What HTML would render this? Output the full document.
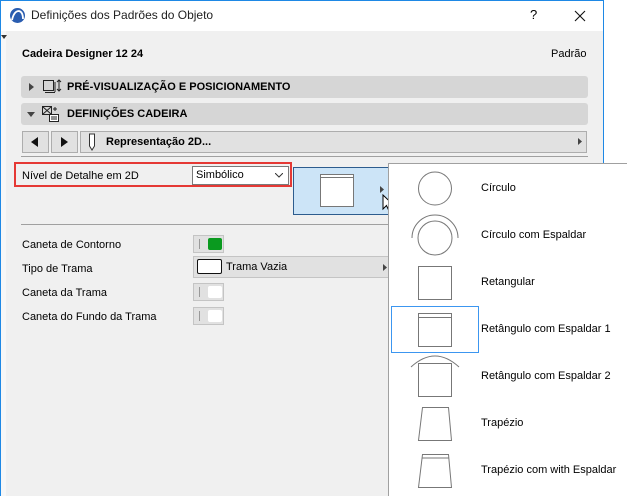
<!DOCTYPE html>
<html><head><meta charset="utf-8"><style>
*{margin:0;padding:0;box-sizing:border-box}
body{width:627px;height:496px;overflow:hidden;background:#fff;font-family:"Liberation Sans",sans-serif;font-size:11px;color:#000;position:relative}
.a{position:absolute}
.t{position:absolute;white-space:nowrap;line-height:13px}
.bar{position:absolute;background:#d6d6d6;border-radius:3px}
.btn{position:absolute;background:#e1e1e1;border:1px solid #adadad}
.pen{position:absolute;background:#e1e1e1;border:1px solid #c4c4c4;width:31px;height:18px}
.pen i{position:absolute;left:5px;top:3px;width:1px;height:10px;background:#999}
.pen b{position:absolute;left:14px;top:2px;width:14px;height:12px;border-radius:2px;background:#fff}
</style></head><body>
<div class="a" style="left:0;top:0;width:604px;height:496px;background:#f0f0f0;border-left:1px solid #1e88e5;border-right:1px solid #1e88e5;border-top:1px solid #1e88e5"></div>
<div class="a" style="left:1px;top:31px;width:5px;height:465px;background:#f7f7f7"></div>
<div class="a" style="left:1px;top:1px;width:602px;height:30px;background:#fff"></div>
<svg class="a" style="left:9px;top:7px" width="17" height="17" viewBox="0 0 17 17"><circle cx="8.5" cy="8.5" r="7.5" fill="#2a5db0"/><path d="M3 13 Q5 4 10 4 Q14 5 14 12" stroke="#fff" stroke-width="1.8" fill="none"/></svg>
<div class="t" style="left:31px;top:9px;font-size:12px;color:#222">Definições dos Padrões do Objeto</div>
<div class="t" style="left:530px;top:8px;font-size:13px">?</div>
<svg class="a" style="left:574px;top:10px" width="12" height="12"><path d="M1 1L11 11M11 1L1 11" stroke="#111" stroke-width="1.1"/></svg>
<svg class="a" style="left:1px;top:35px" width="6" height="4"><path d="M0 0H6L3 4z" fill="#333"/></svg>
<div class="t" style="left:22px;top:48px;font-weight:bold;font-size:11px">Cadeira Designer 12 24</div>
<div class="t" style="left:551px;top:48px">Padrão</div>
<div class="bar" style="left:21px;top:76px;width:567px;height:22px"></div>
<svg class="a" style="left:29px;top:83px" width="5" height="8"><path d="M0 0L5 4L0 8z" fill="#444"/></svg>
<svg class="a" style="left:42px;top:79px" width="20" height="16"><rect x="1.5" y="1.5" width="10" height="10" fill="none" stroke="#222"/><path d="M3 13.5H13M13 3V13" stroke="#222"/><path d="M17 1V12M15 3L17 1L19 3M15 10L17 12L19 10" stroke="#222" fill="none"/></svg>
<div class="t" style="left:67px;top:81px;font-weight:bold">PRÉ-VISUALIZAÇÃO E POSICIONAMENTO</div>
<div class="bar" style="left:21px;top:103px;width:567px;height:22px"></div>
<svg class="a" style="left:27px;top:112px" width="8" height="5"><path d="M0 0H8L4 5z" fill="#444"/></svg>
<svg class="a" style="left:41px;top:105px" width="20" height="18"><rect x="1.5" y="1.5" width="9" height="8" fill="none" stroke="#222"/><path d="M2 2L10 9M10 2L2 9" stroke="#222"/><rect x="8.5" y="9.5" width="9" height="7" fill="#fff" stroke="#222"/><path d="M10 12H16M10 14H16M14 2V6M12 4H16" stroke="#222"/></svg>
<div class="t" style="left:67px;top:108px;font-weight:bold">DEFINIÇÕES CADEIRA</div>
<div class="btn" style="left:22px;top:131px;width:27px;height:22px"></div>
<svg class="a" style="left:31px;top:137px" width="7" height="10"><path d="M7 0L0 5L7 10z" fill="#111"/></svg>
<div class="btn" style="left:51px;top:131px;width:27px;height:22px"></div>
<svg class="a" style="left:61px;top:137px" width="7" height="10"><path d="M0 0L7 5L0 10z" fill="#111"/></svg>
<div class="btn" style="left:80px;top:131px;width:507px;height:22px"></div>
<svg class="a" style="left:88px;top:133px" width="8" height="19"><path d="M1.5 1V13L4 17L6.5 13V1z" fill="#fff" stroke="#333"/></svg>
<div class="t" style="left:106px;top:136px;font-weight:bold">Representação 2D...</div>
<svg class="a" style="left:578px;top:138px" width="4" height="7"><path d="M0 0L4 3.5L0 7z" fill="#444"/></svg>
<div class="a" style="left:21px;top:156px;width:567px;height:1px;background:#a0a0a0"></div>
<div class="a" style="left:14px;top:162px;width:278px;height:25px;border:2px solid #e53935"></div>
<div class="t" style="left:22px;top:170px">Nível de Detalhe em 2D</div>
<div class="a" style="left:192px;top:166px;width:97px;height:19px;background:#fff;border:1px solid #7a7a7a"></div>
<div class="t" style="left:196px;top:169px">Simbólico</div>
<svg class="a" style="left:275px;top:173px" width="8" height="5"><path d="M0 0L4 4L8 0" stroke="#333" fill="none"/></svg>
<div class="a" style="left:293px;top:167px;width:96px;height:48px;background:#cce4f7;border:1px solid #2d5c8e"></div>
<div class="a" style="left:320px;top:174px;width:34px;height:33px;background:#fff;border:1px solid #777"></div>
<div class="a" style="left:320px;top:177px;width:34px;height:1px;background:#777"></div>
<svg class="a" style="left:380px;top:186px" width="4" height="7"><path d="M0 0L4 3.5L0 7z" fill="#444"/></svg>
<svg class="a" style="left:382px;top:194px" width="13" height="19"><path d="M1 1V15L4.5 11.5L7 17L9 16L6.5 10.5H11z" fill="#fff" stroke="#000"/></svg>
<div class="a" style="left:21px;top:224px;width:369px;height:1px;background:#a0a0a0"></div>
<div class="t" style="left:22px;top:239px">Caneta de Contorno</div>
<div class="pen" style="left:193px;top:235px"><i></i><b style="background:#0a9a1f"></b></div>
<div class="t" style="left:22px;top:263px">Tipo de Trama</div>
<div class="a" style="left:193px;top:256px;width:197px;height:22px;background:#e1e1e1;border:1px solid #c4c4c4"></div>
<div class="a" style="left:197px;top:259px;width:25px;height:15px;background:#fff;border:1px solid #111;border-radius:2px"></div>
<div class="t" style="left:226px;top:261px">Trama Vazia</div>
<svg class="a" style="left:383px;top:264px" width="4" height="7"><path d="M0 0L4 3.5L0 7z" fill="#444"/></svg>
<div class="t" style="left:22px;top:287px">Caneta da Trama</div>
<div class="pen" style="left:193px;top:283px"><i></i><b></b></div>
<div class="t" style="left:22px;top:311px">Caneta do Fundo da Trama</div>
<div class="pen" style="left:193px;top:307px"><i></i><b></b></div>
<div class="a" style="left:388px;top:163px;width:239px;height:333px;background:#fff;border:1px solid #a0a0a0;border-right:none;border-bottom:none"></div>
<div class="a" style="left:391px;top:306px;width:88px;height:47px;border:1px solid #3c96f0"></div>
<svg class="a" style="left:400px;top:170px" width="80" height="326" viewBox="0 0 80 326" fill="none" stroke="#777" stroke-width="1">
<circle cx="35" cy="18.5" r="16.5"/>
<circle cx="35" cy="68" r="17"/><path d="M12 68 A23 23 0 0 1 58 68"/>
<rect x="18.5" y="96.5" width="33" height="33"/>
<rect x="18.5" y="143.5" width="33" height="33"/><path d="M19 147.5H51"/>
<rect x="18.5" y="193.5" width="33" height="33"/><path d="M11 197 Q35 175 59 197"/>
<path d="M22.5 237.5H48.5L51.5 270.5H18.5Z"/>
<path d="M22.5 284.5H48.5L51.5 317.5H18.5Z M22 288H49"/>
</svg>
<div class="t" style="left:481px;top:182px">Círculo</div>
<div class="t" style="left:481px;top:229px">Círculo com Espaldar</div>
<div class="t" style="left:481px;top:276px">Retangular</div>
<div class="t" style="left:481px;top:323px">Retângulo com Espaldar 1</div>
<div class="t" style="left:481px;top:370px">Retângulo com Espaldar 2</div>
<div class="t" style="left:481px;top:417px">Trapézio</div>
<div class="t" style="left:481px;top:464px">Trapézio com with Espaldar</div>
</body></html>
